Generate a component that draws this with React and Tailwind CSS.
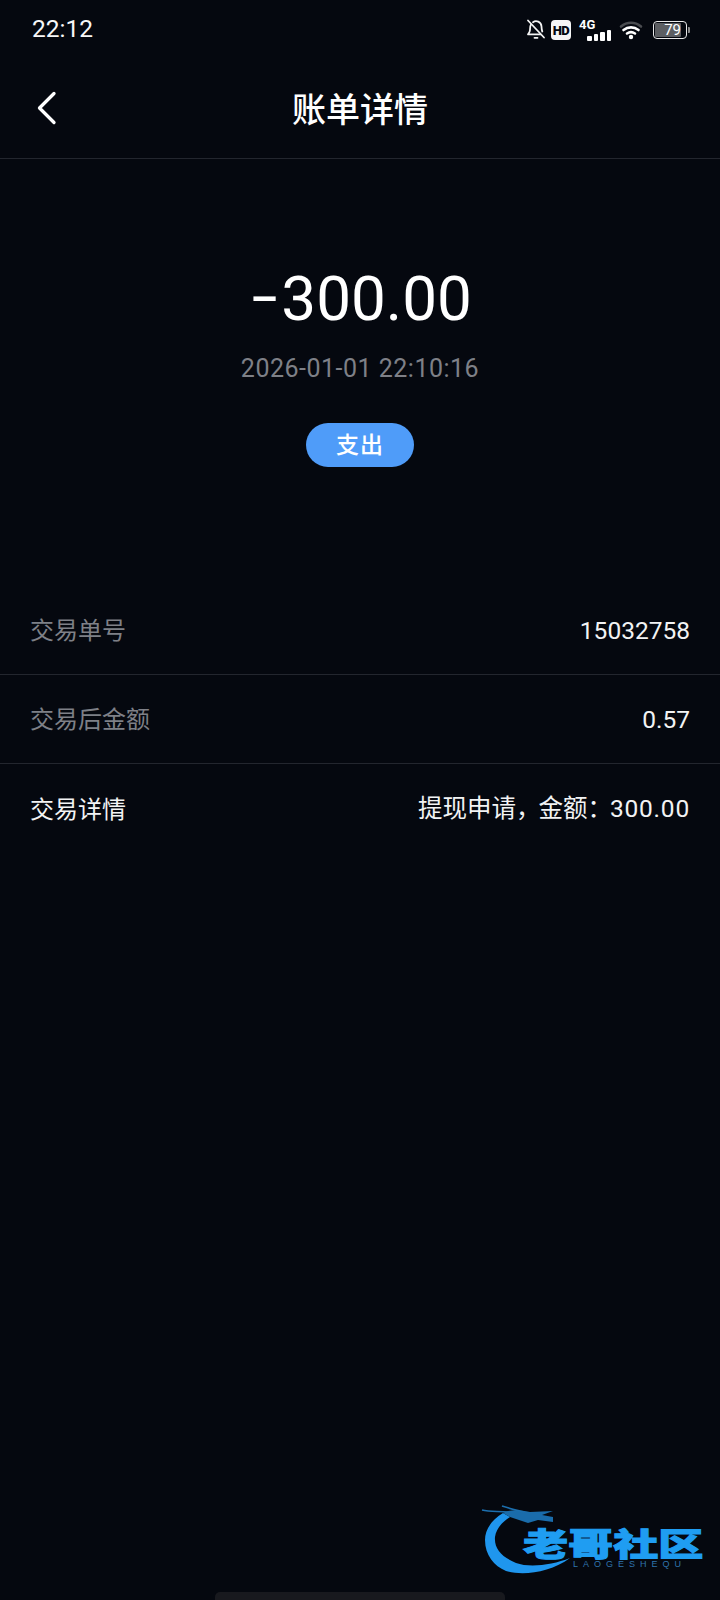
const FONT = "font-['Roboto','Noto_Sans_CJK_SC',sans-serif]";

function Row({ label, value, labelClass, border = true }) {
  return (
    <div className={`flex h-[89px] items-center justify-between px-[30px] pt-[2px] ${border ? "border-b border-[#23262e]" : ""}`}>
      <span className={`text-[24px] leading-none ${labelClass}`}>{label}</span>
      <span className="text-[24.5px] leading-none text-[#f2f3f4]">{value}</span>
    </div>
  );
}

function StatusIcons() {
  return (
    <div className="mt-[2px] flex items-center">
      <svg width="20" height="22" viewBox="0 0 20 22" fill="none" stroke="#f4f4f4" strokeWidth="1.8" strokeLinecap="round" strokeLinejoin="round">
        <path d="M5 5.500C3.900 7 4 9 4 11c0 2-.8 3-2 4.400h12.500M7 3.200C10 1 15.200 2.500 15.500 7.500c.1 2 .1 3.500.8 5" />
        <path d="M2 1.500 18 18.500" />
        <path d="M8.500 18.800h3" />
      </svg>
      <div className="ml-[5px] flex h-[20px] w-[20px] items-center justify-center rounded-[4px] bg-[#f6f6f6] text-[13px] font-black leading-none tracking-[-0.5px] text-[#05080f]">HD</div>
      <div className="relative ml-[8px] h-[22px] w-[32px]">
        <span className="absolute left-0 top-[-1px] text-[13px] font-bold leading-none text-white">4G</span>
        <div className="absolute bottom-0 right-0 flex items-end gap-[2px]">
          <div className="h-[5px] w-[4.500px] rounded-[1px] bg-white" />
          <div className="h-[7px] w-[4.500px] rounded-[1px] bg-white" />
          <div className="h-[9px] w-[4.500px] rounded-[1px] bg-white" />
          <div className="h-[11px] w-[4.500px] rounded-[1px] bg-white" />
        </div>
      </div>
      <svg className="ml-[8px]" width="24" height="20" viewBox="0 0 24 20" fill="none" strokeLinecap="round">
        <path d="M2 6.500C8 1.500 16 1.500 22 6.500" stroke="#4a4c50" strokeWidth="2.600" />
        <path d="M4.500 10C9 6.500 15 6.500 19.500 10" stroke="#fff" strokeWidth="2.600" />
        <path d="M8 13.500C10.500 11.700 13.500 11.700 16 13.500" stroke="#fff" strokeWidth="2.600" />
        <circle cx="12" cy="17" r="2.200" fill="#fff" />
      </svg>
      <div className="ml-[10px] flex items-center">
        <div className="flex h-[18px] w-[34px] items-center overflow-hidden rounded-[4px] border border-[#e8e8e8] p-[1px]">
          <div className="flex h-full w-[26px] items-center justify-end rounded-[1px] bg-[#5c5e62] text-[15px] leading-none text-white">79</div>
        </div>
        <div className="ml-[1px] h-[6px] w-[2px] rounded-r-[1px] bg-[#8a8a8a]" />
      </div>
    </div>
  );
}

function Watermark() {
  return (
    <div className="absolute bottom-[25px] right-[14px] h-[72px] w-[226px]">
      <svg className="absolute left-0 top-0" width="100" height="72" viewBox="0 0 100 72" fill="none">
        <path d="M23 10C10 18 5 28 5 37C5 52 14 63 26 68C42 73 70 70 90 55C72 62 50 65 36 60C22 54 14 46 15 34C16 26 22 19 30 14Z" fill="#1f96ee" />
        <path d="M23 10C30 6 40 7 50 9L73 8L62 12L73 14L73 19L58 17L48 20L30 14Z" fill="#1a6cab" />
        <path d="M2 7C10 9 18 8 28 9M22 3C28 5 36 7 44 9" stroke="#1c6fae" strokeWidth="1.600" />
      </svg>
      <span className="absolute left-[43px] top-[23px] origin-left scale-x-[1.41] whitespace-nowrap font-['Noto_Sans_CJK_SC',sans-serif] text-[32px] font-black leading-[32px] text-[#1f9df2] [-webkit-text-stroke:1px_#1f9df2]">老哥社区</span>
      <span className="absolute left-[93px] top-[57px] whitespace-nowrap font-['Liberation_Sans',sans-serif] text-[9px] leading-none tracking-[5px] text-[#2f74ad]">LAOGESHEQU</span>
    </div>
  );
}

export default function App() {
  return (
    <div className={`relative h-[1600px] w-[720px] overflow-hidden bg-[#05080f] text-white ${FONT}`}>
      <div className="flex h-[58px] items-center justify-between pl-[32px] pr-[30px]">
        <span className="text-[24.500px] leading-none text-[#f7f7f7]">22:12</span>
        <StatusIcons />
      </div>

      <div className="relative flex h-[101px] items-center justify-center border-b border-[#23262e] pt-[4px]">
        <svg className="absolute left-[33px] top-[31px]" width="26" height="38" viewBox="0 0 26 38" fill="none" stroke="#fff" strokeWidth="3.300" strokeLinecap="round" strokeLinejoin="round">
          <path d="M21 4.500 6.500 19 21 33.500" />
        </svg>
        <h1 className="text-[34px] font-medium leading-none text-white">账单详情</h1>
      </div>

      <div className="flex flex-col items-center pt-[105px]">
        <div className="ml-[8px] flex h-[70px] items-center text-[62px] leading-none text-white">
          <span className="mr-[8px] inline-block -translate-y-[3px] scale-x-[1.5]">-</span>
          <span>300.00</span>
        </div>
        <div className="mt-[22px] text-[25px] leading-none tracking-[0.5px] text-[#7e8087]">2026-01-01 22:10:16</div>
        <div className="mt-[42px] flex h-[44px] w-[108px] items-center justify-center rounded-full bg-[#4f9cf9] text-[23px] font-medium leading-none tracking-[1px] text-white">支出</div>
      </div>

      <div className="mt-[119px]">
        <Row label="交易单号" value="15032758" labelClass="text-[#7e8087]" />
        <Row label="交易后金额" value="0.57" labelClass="text-[#7e8087]" />
        <Row
          label="交易详情"
          value={
            <>
              提现申请<span className="tracking-[-2px]">，</span>金额<span className="tracking-[-2px]">：</span>
              <span className="tracking-[0.8px]">300.00</span>
            </>
          }
          labelClass="text-[#f2f3f4]"
          border={false}
        />
      </div>

      <Watermark />
      <div className="absolute bottom-0 left-[215px] h-[8px] w-[290px] rounded-t-[5px] bg-[#18191e]" />
    </div>
  );
}
